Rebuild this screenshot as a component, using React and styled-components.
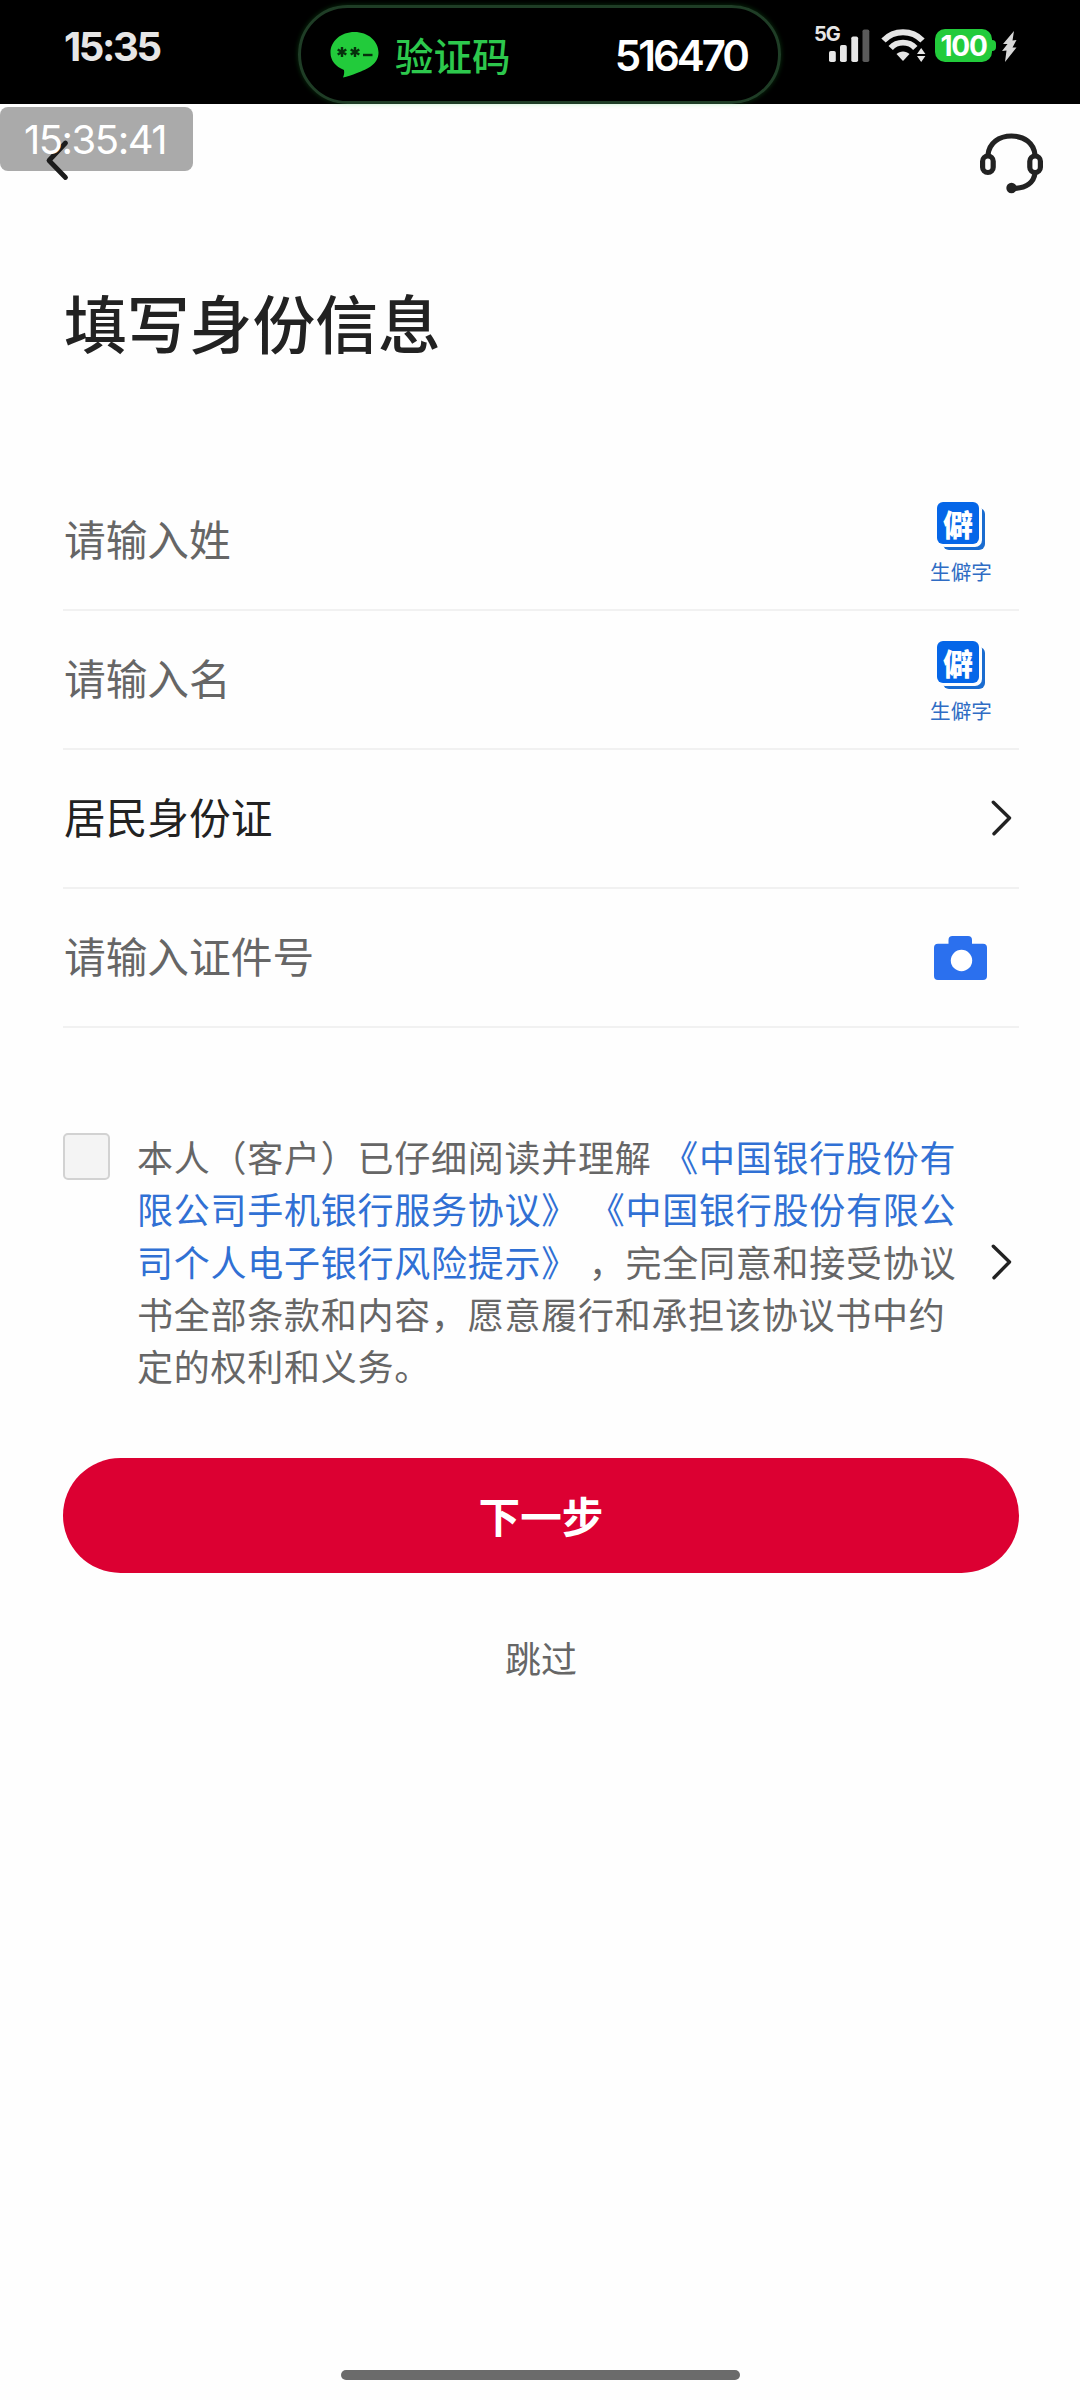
import { useState } from 'react';
import styled, { createGlobalStyle } from 'styled-components';

const GlobalStyle = createGlobalStyle`
  * {
    box-sizing: border-box;
  }

  body {
    margin: 0;
    background: #fefefe;
    font-family: 'Noto Sans CJK SC', sans-serif;
    text-spacing-trim: space-all;
  }

  svg {
    display: block;
    flex-shrink: 0;
  }
`;

const Screen = styled.div`
  display: flex;
  flex-direction: column;
  width: 1080px;
  height: 2400px;
  overflow: hidden;
  background: #fefefe;
`;

// ─────────────────────────────────────────────────────
// 状态栏
// ─────────────────────────────────────────────────────

const StatusBar = styled.header`
  display: flex;
  align-items: flex-start;
  height: 104px;
  flex-shrink: 0;
  background: #000;
`;

const Clock = styled.span`
  width: 298px;
  padding: 23px 0 0 64px;
  font-family: Inter, sans-serif;
  font-size: 40px;
  font-weight: 700;
  line-height: 48px;
  letter-spacing: -2.4px;
  color: #e6e6e6;
`;

const Capsule = styled.div`
  display: flex;
  align-items: center;
  width: 483px;
  height: 99px;
  margin-top: 5px;
  padding: 0 31px 0 29px;
  border: 3px solid #1f3d26;
  border-radius: 50px;
  box-shadow: 0 0 5px rgba(34, 203, 59, 0.25);
`;

const CapsuleLabel = styled.span`
  flex: 1;
  margin: -2px 0 0 16px;
  font-size: 38.5px;
  font-weight: 500;
  line-height: 50px;
  color: #2dc84d;
`;

const CapsuleCode = styled.span`
  margin-top: 2px;
  font-family: Inter, sans-serif;
  font-size: 42px;
  font-weight: 600;
  line-height: 50px;
  letter-spacing: -3px;
  color: #fff;
`;

const StatusIcons = styled.div`
  display: flex;
  align-items: flex-end;
  height: 62px;
  margin-left: 33px;
`;

const Network = styled.span`
  align-self: flex-start;
  width: 26px;
  margin: 22px -11px 0 0;
  font-family: Inter, sans-serif;
  font-size: 20px;
  font-weight: 700;
  line-height: 24px;
  letter-spacing: -1px;
  color: #e6e6e6;
`;

const Battery = styled.span`
  display: flex;
  align-items: center;
  justify-content: center;
  width: 57px;
  height: 33px;
  margin-left: 8px;
  border-radius: 10px;
  background: #22cb3b;
  font-family: Inter, sans-serif;
  font-size: 28px;
  font-weight: 700;
  letter-spacing: -1.2px;
  color: #fff;
`;

const BatteryTip = styled.span`
  width: 4px;
  height: 11px;
  margin: 0 6px 11px 0;
  border-radius: 0 4px 4px 0;
  background: #22cb3b;
`;

// ─────────────────────────────────────────────────────
// 顶部导航
// ─────────────────────────────────────────────────────

const NavBar = styled.nav`
  position: relative;
  display: flex;
  justify-content: space-between;
  align-items: flex-start;
  height: 116px;
  padding: 28px 36px 0 44px;
`;

const BackButton = styled.button`
  position: relative;
  margin-top: 7px;
  padding: 0;
  border: none;
  background: none;
`;

// 悬浮在页面上的时间标签
const TimeBadge = styled.div`
  position: absolute;
  top: 3px;
  left: 0;
  width: 193px;
  height: 64px;
  border-radius: 8px;
  background: #aaa;
`;

const TimeBadgeText = styled.span`
  position: absolute;
  top: 12px;
  left: 24px;
  font-family: Inter, sans-serif;
  font-size: 40px;
  font-weight: 400;
  line-height: 48px;
  letter-spacing: -1.5px;
  white-space: nowrap;
  color: #fff;
`;

// ─────────────────────────────────────────────────────
// 表单
// ─────────────────────────────────────────────────────

const Content = styled.main`
  flex: 1;
  padding: 0 61px 0 63px;
`;

const Title = styled.h1`
  margin: 55px 0 0 1px;
  font-size: 62.8px;
  font-weight: 500;
  line-height: 92px;
  color: #222;
`;

const Form = styled.div`
  margin-top: 105px;
`;

const FormRow = styled.div`
  display: flex;
  align-items: center;
  justify-content: space-between;
  height: 139px;
  padding-right: ${props => props.$end}px;
  border-bottom: 2px solid #f1f1f1;
`;

const RowText = styled.span`
  margin-left: 1px;
  padding-bottom: 5px;
  font-size: 41.7px;
  line-height: 60px;
  color: ${props => (props.$filled ? '#222' : '#666')};
`;

const RareButton = styled.button`
  display: flex;
  flex-direction: column;
  align-items: center;
  width: 64px;
  padding: 6px 0 0;
  border: none;
  background: none;
`;

const RareIcon = styled.span`
  display: flex;
  align-items: center;
  justify-content: center;
  width: 42px;
  height: 42px;
  margin: 0 6px 6px 0;
  border-radius: 6px;
  background: #0566e8;
  box-shadow: 2px 2px 0 1px #fefefe, 6px 6px 0 0 #1a6cd0;
  font-family: 'Noto Sans CJK SC', sans-serif;
  font-size: 30px;
  font-weight: 900;
  line-height: 40px;
  color: #fff;
`;

const RareLabel = styled.span`
  margin-top: 7px;
  font-family: 'Noto Sans CJK SC', sans-serif;
  font-size: 20.6px;
  line-height: 28px;
  color: #2f6cc4;
`;

// ─────────────────────────────────────────────────────
// 协议与按钮
// ─────────────────────────────────────────────────────

const Agreement = styled.div`
  display: flex;
  align-items: center;
  margin-top: 104px;
  padding-right: 7px;
`;

const CheckBox = styled.button`
  align-self: flex-start;
  width: 47px;
  height: 47px;
  margin-top: 1px;
  padding: 0;
  border: 2px solid #d2d2d2;
  border-radius: 5px;
  background: ${props => (props.$checked ? '#dc0032' : '#f4f4f4')};
`;

const AgreementText = styled.p`
  width: 824px;
  margin: -2px 31px 2px 27px;
  font-size: 36px;
  line-height: 52.3px;
  letter-spacing: 0.75px;
  word-spacing: 2px;
  color: #666;
`;

const AgreementLink = styled.span`
  color: #3070d4;
`;

const NextButton = styled.button`
  display: block;
  width: 100%;
  height: 115px;
  margin-top: 65px;
  padding: 0 0 2px;
  border: none;
  border-radius: 58px;
  background: #dc0032;
  font-family: 'Noto Sans CJK SC', sans-serif;
  font-size: 41.6px;
  font-weight: 700;
  color: #fff;
`;

const SkipButton = styled.button`
  display: block;
  margin: 57px auto 0;
  padding: 0;
  border: none;
  background: none;
  font-family: 'Noto Sans CJK SC', sans-serif;
  font-size: 36px;
  line-height: 54px;
  color: #666;
`;

const HomeIndicator = styled.div`
  width: 399px;
  height: 10px;
  margin: 0 auto 20px;
  border-radius: 5px;
  background: #6b6b6b;
`;

// ─────────────────────────────────────────────────────
// 图标
// ─────────────────────────────────────────────────────

function MessageIcon() {
  return (
    <svg width="49" height="46" viewBox="0 0 49 46">
      <path
        d="M24.5 0C38 0 48.5 9 48.5 20.5S38 37 27 41C22 43 17 45 13 45.500C14 43 14.500 41 14 38C5.500 34.500 0.500 28.500 0.500 20.500C0.500 9 11 0 24.500 0Z"
        fill="#22cb3b"
      />
      <g stroke="#06310c" strokeWidth="2.4">
        <path d="M12 15v10M7.700 17.500l8.600 5M16.300 17.500l-8.600 5" />
        <path d="M25 15v10M20.700 17.500l8.600 5M29.300 17.500l-8.600 5" />
        <path d="M33 23h9.500" />
      </g>
    </svg>
  );
}

function SignalIcon() {
  return (
    <svg width="41" height="34" viewBox="0 0 41 34">
      <rect x="0" y="23" width="6.800" height="11" rx="1.800" fill="#e6e6e6" />
      <rect x="11" y="17" width="6.800" height="17" rx="1.800" fill="#e6e6e6" />
      <rect x="22.300" y="8.500" width="6.800" height="25.500" rx="1.800" fill="#e6e6e6" />
      <rect x="33.500" y="1.500" width="6.800" height="32.500" rx="1.800" fill="#5a5a5a" />
    </svg>
  );
}

const WifiSvg = styled.svg`
  margin-left: 11px;
`;

function WifiIcon() {
  return (
    <WifiSvg width="46" height="34" viewBox="0 0 46 34">
      <path d="M2.500 12.500C13 1.500 31 1.500 41.500 12.500" fill="none" stroke="#e6e6e6" strokeWidth="6" />
      <path d="M9.700 20C16 12.800 28 12.800 34.300 20" fill="none" stroke="#e6e6e6" strokeWidth="5.800" />
      <path d="M15.500 26C19 22.500 25 22.500 28.500 26L22 33Z" fill="#e6e6e6" />
      <path d="M36 26L40.200 20L44.400 26ZM36 28L40.200 34L44.400 28Z" fill="#e6e6e6" />
    </WifiSvg>
  );
}

function BoltIcon() {
  return (
    <svg width="15" height="31" viewBox="0 0 15 31">
      <path d="M12 0L1 13H5.500L0 20L4.500 19.500L3 31L14.500 16.500H10.500L14.500 9L10.500 9.500Z" fill="#d8d8d8" />
    </svg>
  );
}

function HeadsetIcon() {
  return (
    <svg width="65" height="62" viewBox="0 0 65 62" fill="none" stroke="#222" strokeWidth="5.200">
      <path d="M9 23C10 11 20 4 32.500 4S55 11 56 23" />
      <rect x="3.600" y="24" width="10.600" height="16.500" rx="5.300" />
      <rect x="50.800" y="24" width="10.600" height="16.500" rx="5.300" />
      <path d="M56 41C55 50 48 56.500 32.500 56.500" />
      <circle cx="32.500" cy="56" r="5.200" fill="#222" stroke="none" />
    </svg>
  );
}

function ChevronRight() {
  return (
    <svg width="21" height="38" viewBox="0 0 21 38">
      <path
        d="M2.300 2.300L18.500 18L3 33.700"
        fill="none"
        stroke="#222"
        strokeWidth="3.400"
        strokeLinecap="round"
        strokeLinejoin="round"
      />
    </svg>
  );
}

function CameraIcon() {
  return (
    <svg width="53" height="44" viewBox="0 0 53 44">
      <path
        d="M4 7.800H14.500V4Q14.500 0 18.500 0H34Q38 0 38 4V7.800H49Q53 7.800 53 11.800V40Q53 44 49 44H4Q0 44 0 40V11.800Q0 7.800 4 7.800Z"
        fill="#2b70ee"
      />
      <circle cx="27.500" cy="24.500" r="10.700" fill="#fff" />
    </svg>
  );
}

function RareCharacter() {
  return (
    <RareButton>
      <RareIcon>僻</RareIcon>
      <RareLabel>生僻字</RareLabel>
    </RareButton>
  );
}

export default function App() {
  const [checked, setChecked] = useState(false);

  return (
    <>
      <GlobalStyle />
      <Screen>
        <StatusBar>
          <Clock>15:35</Clock>
          <Capsule>
            <MessageIcon />
            <CapsuleLabel>验证码</CapsuleLabel>
            <CapsuleCode>516470</CapsuleCode>
          </Capsule>
          <StatusIcons>
            <Network>5G</Network>
            <SignalIcon />
            <WifiIcon />
            <Battery>100</Battery>
            <BatteryTip />
            <BoltIcon />
          </StatusIcons>
        </StatusBar>

        <NavBar>
          <TimeBadge />
          <BackButton>
            <svg width="26" height="42" viewBox="0 0 26 42">
              <path
                d="M21.500 4L5 21.500L21.500 38.500"
                fill="none"
                stroke="#1c1c1c"
                strokeWidth="4.800"
                strokeLinecap="round"
                strokeLinejoin="round"
              />
            </svg>
          </BackButton>
          <TimeBadgeText>15:35:41</TimeBadgeText>
          <HeadsetIcon />
        </NavBar>

        <Content>
          <Title>填写身份信息</Title>

          <Form>
            <FormRow $end={26}>
              <RowText>请输入姓</RowText>
              <RareCharacter />
            </FormRow>
            <FormRow $end={26}>
              <RowText>请输入名</RowText>
              <RareCharacter />
            </FormRow>
            <FormRow $end={7}>
              <RowText $filled>居民身份证</RowText>
              <ChevronRight />
            </FormRow>
            <FormRow $end={32}>
              <RowText>请输入证件号</RowText>
              <CameraIcon />
            </FormRow>
          </Form>

          <Agreement>
            <CheckBox $checked={checked} onClick={() => setChecked(!checked)} />
            <AgreementText>
              本人（客户）已仔细阅读并理解{' '}
              <AgreementLink>《中国银行股份有限公司手机银行服务协议》</AgreementLink>{' '}
              <AgreementLink>《中国银行股份有限公司个人电子银行风险提示》</AgreementLink>{' '}
              ，完全同意和接受协议书全部条款和内容，愿意履行和承担该协议书中约定的权利和义务。
            </AgreementText>
            <ChevronRight />
          </Agreement>

          <NextButton>下一步</NextButton>
          <SkipButton>跳过</SkipButton>
        </Content>

        <HomeIndicator />
      </Screen>
    </>
  );
}
